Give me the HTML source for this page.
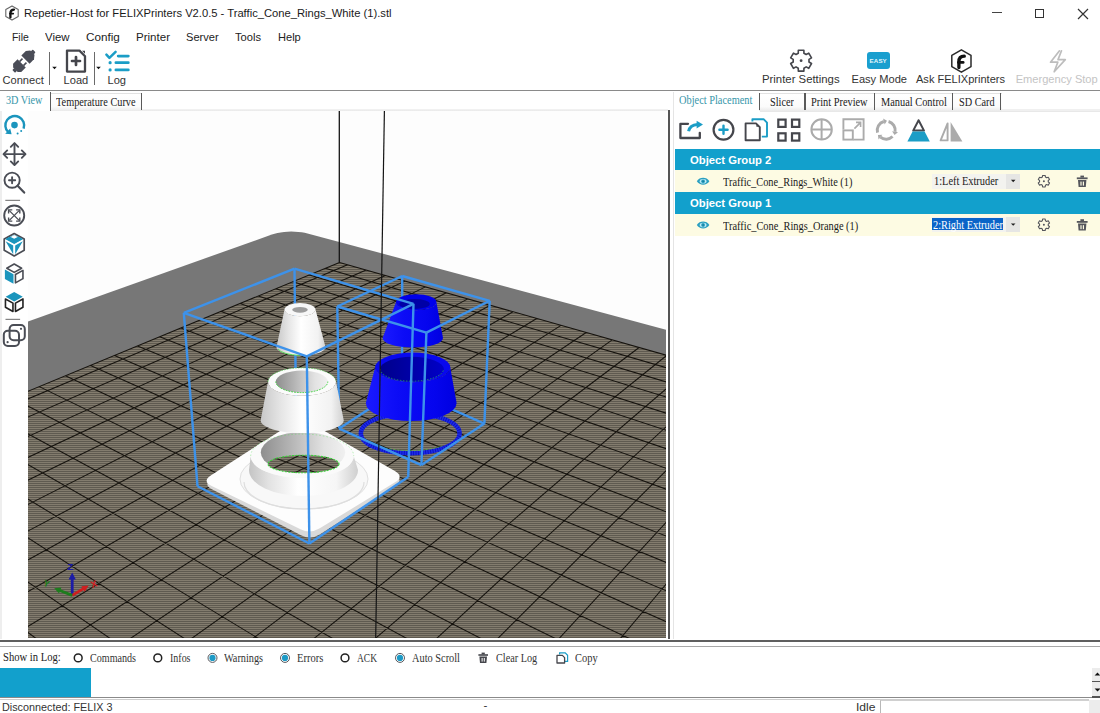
<!DOCTYPE html>
<html><head><meta charset="utf-8">
<style>
html,body{margin:0;padding:0;}
body{width:1100px;height:713px;overflow:hidden;background:#ffffff;position:relative;font-family:"Liberation Sans",sans-serif;color:#222;}
.a{position:absolute;white-space:nowrap;}
.sans{font-family:"Liberation Sans",sans-serif;}
.serif{font-family:"Liberation Serif",serif;}
svg{position:absolute;overflow:hidden;}
</style></head><body>
<svg style="left:4px;top:5px" width="16" height="17" viewBox="0 0 16 17"><path d="M8 0.9 L14.2 4.45 L14.2 11.55 L8 15.1 L1.8 11.55 L1.8 4.45 Z" fill="#fff" stroke="#666" stroke-width="1.1" stroke-linejoin="round"/><path d="M6.4 12.4 L6.4 8.2 C6.4 5.8 7.6 4.7 10 4.6" fill="none" stroke="#111" stroke-width="2.3" stroke-linecap="round"/><path d="M6 8.6 L9.2 8.6" stroke="#111" stroke-width="1.8" stroke-linecap="round"/></svg>
<div class="a" style="left:23.5px;top:7.38px;font-family:'Liberation Sans',sans-serif;font-size:11.6px;line-height:11.6px;color:#1a1a1a;font-weight:400;transform:scaleX(0.9656);transform-origin:0 0;">Repetier-Host for FELIXPrinters V2.0.5 - Traffic_Cone_Rings_White (1).stl</div>
<div class="a" style="left:992px;top:12px;width:10px;height:1.2px;background:#444;"></div>
<div class="a" style="left:1035px;top:9px;width:7px;height:7px;background:transparent;border:1.3px solid #333;"></div>
<svg style="left:1077px;top:8px" width="12" height="12" viewBox="0 0 12 12"><path d="M1 1L11 11M11 1L1 11" stroke="#333" stroke-width="1.2"/></svg>
<div class="a" style="left:12.0px;top:31.48px;font-family:'Liberation Sans',sans-serif;font-size:11.6px;line-height:11.6px;color:#222;font-weight:400;transform:scaleX(0.8990);transform-origin:0 0;">File</div>
<div class="a" style="left:45.0px;top:31.48px;font-family:'Liberation Sans',sans-serif;font-size:11.6px;line-height:11.6px;color:#222;font-weight:400;transform:scaleX(0.9831);transform-origin:0 0;">View</div>
<div class="a" style="left:85.7px;top:31.48px;font-family:'Liberation Sans',sans-serif;font-size:11.6px;line-height:11.6px;color:#222;font-weight:400;transform:scaleX(1.0085);transform-origin:0 0;">Config</div>
<div class="a" style="left:136.0px;top:31.48px;font-family:'Liberation Sans',sans-serif;font-size:11.6px;line-height:11.6px;color:#222;font-weight:400;transform:scaleX(0.9954);transform-origin:0 0;">Printer</div>
<div class="a" style="left:186.0px;top:31.48px;font-family:'Liberation Sans',sans-serif;font-size:11.6px;line-height:11.6px;color:#222;font-weight:400;transform:scaleX(0.9574);transform-origin:0 0;">Server</div>
<div class="a" style="left:235.0px;top:31.48px;font-family:'Liberation Sans',sans-serif;font-size:11.6px;line-height:11.6px;color:#222;font-weight:400;transform:scaleX(0.9602);transform-origin:0 0;">Tools</div>
<div class="a" style="left:278.0px;top:31.48px;font-family:'Liberation Sans',sans-serif;font-size:11.6px;line-height:11.6px;color:#222;font-weight:400;transform:scaleX(0.9556);transform-origin:0 0;">Help</div>
<svg style="left:0px;top:44px" width="60" height="40" viewBox="0 44 60 40"><g transform="translate(23.9,61.2) rotate(-45)"><rect x="-14.5" y="-2" width="3" height="4" rx="0.8" fill="#4a4d57"/><path d="M-12 -3.2 L-9.5 -5.8 L-3.2 -5.8 L-3.2 5.8 L-9.5 5.8 L-12 3.2Z" fill="#4a4d57"/><rect x="-3.4" y="-3.6" width="4.2" height="1.6" fill="#4a4d57"/><rect x="-3.4" y="2" width="4.2" height="1.6" fill="#4a4d57"/><path d="M2.2 -5.8 L8.5 -5.8 L12 -3 L12 3 L8.5 5.8 L2.2 5.8Z" fill="#4a4d57"/><rect x="11.5" y="-2" width="3" height="4" rx="0.8" fill="#4a4d57"/></g></svg>
<div class="a" style="left:2.5px;top:75.20px;font-family:'Liberation Sans',sans-serif;font-size:11.1px;line-height:11.1px;color:#333;font-weight:400;">Connect</div>
<div class="a" style="left:49px;top:52px;width:1.2px;height:33px;background:#6a6a6a;"></div>
<svg style="left:51px;top:66px" width="7" height="4" viewBox="0 0 7 4"><path d="M1.2 0.8 L5.8 0.8 L3.5 3.2Z" fill="#111"/></svg>
<svg style="left:60px;top:44px" width="40" height="40" viewBox="60 44 40 40"><path d="M67 50.6 L79.5 50.6 L85 56.2 L85 71.6 L67 71.6 Z" fill="none" stroke="#45464c" stroke-width="2.3" stroke-linejoin="round"/><path d="M81 50.2 L85.6 54.8 L85.6 50.2Z" fill="#fff"/><path d="M82 50.8 L85 53.8 L85 50.8Z" fill="#45464c"/><path d="M76 57 L76 65 M72 61 L80 61" stroke="#45464c" stroke-width="2.7" stroke-linecap="round"/></svg>
<div class="a" style="left:63.6px;top:75.20px;font-family:'Liberation Sans',sans-serif;font-size:11.1px;line-height:11.1px;color:#333;font-weight:400;">Load</div>
<div class="a" style="left:93.6px;top:52px;width:1.2px;height:33px;background:#6a6a6a;"></div>
<svg style="left:95px;top:66px" width="7" height="4" viewBox="0 0 7 4"><path d="M1.2 0.8 L5.8 0.8 L3.5 3.2Z" fill="#111"/></svg>
<svg style="left:100px;top:44px" width="40" height="40" viewBox="100 44 40 40"><path d="M106.4 54.6 L109.4 57.8 L115.6 51.8" fill="none" stroke="#1b9dc6" stroke-width="2.5" stroke-linecap="round" stroke-linejoin="round"/><path d="M118.2 56.1 L128.3 56.1 M115.9 62.7 L128.3 62.7 M115.9 69.9 L128.3 69.9" stroke="#1b9dc6" stroke-width="2.8" stroke-linecap="round"/><circle cx="110.1" cy="62.7" r="1.6" fill="#1b9dc6"/><circle cx="110.1" cy="69.9" r="1.6" fill="#1b9dc6"/></svg>
<div class="a" style="left:107.5px;top:75.20px;font-family:'Liberation Sans',sans-serif;font-size:11.1px;line-height:11.1px;color:#333;font-weight:400;">Log</div>
<svg style="left:780px;top:44px" width="40" height="40" viewBox="780 44 40 40"><g transform="translate(801.1,60.7)"><path d="M-2.82,-7.49 L-2.78,-10.44 L2.78,-10.44 L2.82,-7.49 L5.07,-6.18 L7.65,-7.62 L10.43,-2.81 L7.89,-1.30 L7.89,1.30 L10.43,2.81 L7.65,7.62 L5.07,6.18 L2.82,7.49 L2.78,10.44 L-2.78,10.44 L-2.82,7.49 L-5.07,6.18 L-7.65,7.62 L-10.43,2.81 L-7.89,1.30 L-7.89,-1.30 L-10.43,-2.81 L-7.65,-7.62 L-5.07,-6.18Z" fill="none" stroke="#45464c" stroke-width="1.6" stroke-linejoin="round"/><circle r="1.4" fill="#45464c"/></g></svg>
<div class="a" style="left:762.0px;top:73.89px;font-family:'Liberation Sans',sans-serif;font-size:11.35px;line-height:11.35px;color:#333;font-weight:400;">Printer Settings</div>
<div class="a" style="left:867px;top:52.3px;width:23px;height:17.2px;background:#1a9fcf;border-radius:3px;"></div>
<div class="a" style="left:869.6px;top:58.35px;font-family:'Liberation Sans',sans-serif;font-size:6.2px;line-height:6.2px;color:#e8f6fb;font-weight:700;letter-spacing:0.1px;">EASY</div>
<div class="a" style="left:851.5px;top:74.10px;font-family:'Liberation Sans',sans-serif;font-size:11.1px;line-height:11.1px;color:#333;font-weight:400;">Easy Mode</div>
<svg style="left:945px;top:44px" width="35" height="35" viewBox="945 44 35 35"><path d="M961.4 49.8 L971 55.4 L971 66.6 L961.4 72.2 L951.8 66.6 L951.8 55.4Z" fill="#fff" stroke="#2a2a2a" stroke-width="1.5" stroke-linejoin="round"/><path d="M958.9 67.6 L958.9 61.6 C958.9 58 960.6 56.3 964.3 56.2" fill="none" stroke="#111" stroke-width="3.3" stroke-linecap="round"/><path d="M958.4 62.4 L963.2 62.4" stroke="#111" stroke-width="2.6" stroke-linecap="round"/></svg>
<div class="a" style="left:916.0px;top:74.15px;font-family:'Liberation Sans',sans-serif;font-size:11.05px;line-height:11.05px;color:#333;font-weight:400;">Ask FELIXprinters</div>
<svg style="left:1040px;top:44px" width="35" height="35" viewBox="1040 44 35 35"><path d="M1059.5 50.8 L1050.5 62.2 L1057.8 62.2 L1054.2 71.8 L1065.3 59.6 L1058 59.6 L1061.5 50.8" fill="none" stroke="#bdbdbd" stroke-width="1.7" stroke-linejoin="round" stroke-linecap="round"/></svg>
<div class="a" style="left:1015.7px;top:74.10px;font-family:'Liberation Sans',sans-serif;font-size:11.1px;line-height:11.1px;color:#c4c4c4;font-weight:400;">Emergency Stop</div>
<div class="a" style="left:0px;top:89.5px;width:1100px;height:1.3px;background:#8a8a8a;"></div>
<div class="a" style="left:0px;top:108.5px;width:668px;height:2.5px;background:linear-gradient(#f4f4f4,#e9e9e9);"></div>
<div class="a" style="left:51px;top:93px;width:90px;height:18px;background:linear-gradient(#ffffff 0%,#fbfbfb 70%,#e6e6e6 100%);border-top:1px solid #e2e2e2;"></div>
<div class="a" style="left:0px;top:91px;width:50px;height:20px;background:#ffffff;"></div>
<div class="a" style="left:6.0px;top:93.85px;font-family:'Liberation Serif',serif;font-size:12px;line-height:12px;color:#3796aa;font-weight:400;transform:scaleX(0.8518);transform-origin:0 0;">3D View</div>
<div class="a" style="left:50px;top:92px;width:1.4px;height:18.5px;background:#5a5a5a;"></div>
<div class="a" style="left:56.2px;top:95.75px;font-family:'Liberation Serif',serif;font-size:12px;line-height:12px;color:#222;font-weight:400;transform:scaleX(0.8578);transform-origin:0 0;">Temperature Curve</div>
<div class="a" style="left:140.7px;top:93px;width:1.4px;height:17px;background:#5a5a5a;"></div>
<div class="a" style="left:674px;top:108.5px;width:426px;height:2.5px;background:linear-gradient(#f4f4f4,#e9e9e9);"></div>
<div class="a" style="left:760px;top:93px;width:340px;height:18px;background:linear-gradient(#ffffff 0%,#fbfbfb 70%,#e6e6e6 100%);border-top:1px solid #e2e2e2;"></div>
<div class="a" style="left:674px;top:91px;width:85px;height:20px;background:#ffffff;"></div>
<div class="a" style="left:673.2px;top:92px;width:1.2px;height:20px;background:#e6e6e6;"></div>
<div class="a" style="left:679.0px;top:93.55px;font-family:'Liberation Serif',serif;font-size:12px;line-height:12px;color:#3796aa;font-weight:400;transform:scaleX(0.8638);transform-origin:0 0;">Object Placement</div>
<div class="a" style="left:758.8px;top:93px;width:1.4px;height:17px;background:#5a5a5a;"></div>
<div class="a" style="left:804.1999999999999px;top:93px;width:1.4px;height:17px;background:#5a5a5a;"></div>
<div class="a" style="left:873.8px;top:93px;width:1.4px;height:17px;background:#5a5a5a;"></div>
<div class="a" style="left:952.1px;top:93px;width:1.4px;height:17px;background:#5a5a5a;"></div>
<div class="a" style="left:1000.1px;top:93px;width:1.4px;height:17px;background:#5a5a5a;"></div>
<div class="a" style="left:769.6px;top:95.75px;font-family:'Liberation Serif',serif;font-size:12px;line-height:12px;color:#222;font-weight:400;transform:scaleX(0.8571);transform-origin:0 0;">Slicer</div>
<div class="a" style="left:811.4px;top:95.75px;font-family:'Liberation Serif',serif;font-size:12px;line-height:12px;color:#222;font-weight:400;transform:scaleX(0.8619);transform-origin:0 0;">Print Preview</div>
<div class="a" style="left:880.7px;top:95.75px;font-family:'Liberation Serif',serif;font-size:12px;line-height:12px;color:#222;font-weight:400;transform:scaleX(0.8634);transform-origin:0 0;">Manual Control</div>
<div class="a" style="left:958.6px;top:95.75px;font-family:'Liberation Serif',serif;font-size:12px;line-height:12px;color:#222;font-weight:400;transform:scaleX(0.8543);transform-origin:0 0;">SD Card</div>
<div class="a" style="left:1001.5px;top:108.5px;width:98.5px;height:2.5px;background:#f0f0f0;"></div>
<div class="a" style="left:1001.5px;top:93px;width:98.5px;height:15.5px;background:#ffffff;"></div>
<svg style="left:0px;top:112px" width="28" height="240" viewBox="0 112 28 240"><path d="M23.6 128.6 A9.4 9.4 0 1 0 8.3 132.2" fill="none" stroke="#1b95bd" stroke-width="2.4"/><path d="M5.2 133.8 L11.6 134.3 L10.2 128.4Z" fill="#1b95bd"/><circle cx="14.5" cy="125.1" r="3.3" fill="#1b95bd"/><circle cx="21.2" cy="131" r="1" fill="#1b95bd"/><circle cx="17.6" cy="133.4" r="1" fill="#1b95bd"/><path d="M14.5 143.2 L14.5 165 M3.6 154.1 L25.4 154.1" stroke="#4a4d55" stroke-width="1.9"/><path d="M10.8 146.8 L14.5 143.1 L18.2 146.8 M10.8 161.4 L14.5 165.1 L18.2 161.4 M7.2 150.4 L3.5 154.1 L7.2 157.8 M21.8 150.4 L25.5 154.1 L21.8 157.8" fill="none" stroke="#4a4d55" stroke-width="1.9" stroke-linecap="round" stroke-linejoin="round"/><circle cx="12.1" cy="180.2" r="7.6" fill="none" stroke="#4a4d55" stroke-width="1.9"/><path d="M17.6 185.7 L24.2 192.6" stroke="#4a4d55" stroke-width="2.2" stroke-linecap="round"/><path d="M12.1 177.1 L12.1 183.3 M9 180.2 L15.2 180.2" stroke="#4a4d55" stroke-width="1.9" stroke-linecap="round"/><rect x="5.3" y="199.8" width="14.8" height="1.1" fill="#777"/><circle cx="14.2" cy="215.5" r="10" fill="none" stroke="#4a4d55" stroke-width="1.9"/><path d="M9.3 210.6 L19.1 220.4 M19.1 210.6 L9.3 220.4" stroke="#4a4d55" stroke-width="1.3"/><path d="M8.6 213.6 L8.6 209.9 L12.3 209.9 M16.1 209.9 L19.8 209.9 L19.8 213.6 M19.8 217.4 L19.8 221.1 L16.1 221.1 M12.3 221.1 L8.6 221.1 L8.6 217.4" fill="none" stroke="#4a4d55" stroke-width="1.4"/><polygon points="14.2,233.5 24.2,239.1 24.2,250.29999999999998 14.2,255.89999999999998 4.199999999999999,250.29999999999998 4.199999999999999,239.1" fill="none" stroke="#4a4d55" stroke-width="1.7" stroke-linejoin="round"/><polygon points="5.6,239.29999999999998 14.2,243.89999999999998 22.799999999999997,239.29999999999998 19.2,236.89999999999998 9.2,236.89999999999998" fill="#1b95bd"/><polygon points="5.6,241.29999999999998 13.2,245.5 13.2,254.29999999999998" fill="#1b95bd"/><polygon points="22.799999999999997,241.29999999999998 15.2,245.5 15.2,254.29999999999998" fill="#1b95bd"/><polygon points="5.6,239.1 14.2,234.7 22.799999999999997,239.1 14.2,243.5" fill="#1b95bd"/><polygon points="10.7,236.89999999999998 14.2,235.1 17.7,236.89999999999998 14.2,238.7" fill="#fff"/><polygon points="14.20,264.03 21.64,268.20 14.20,272.37 6.76,268.20" fill="none" stroke="#4a4d55" stroke-width="1.6" stroke-linejoin="round"/><polygon points="4.90,269.39 13.50,274.21 13.50,283.81 4.90,278.99" fill="#1b95bd"/><polygon points="15.45,274.53 22.95,270.33 22.95,278.67 15.45,282.87" fill="none" stroke="#4a4d55" stroke-width="1.6" stroke-linejoin="round"/><polygon points="14.20,292.00 22.77,296.80 14.20,301.60 5.63,296.80" fill="#1b95bd"/><polygon points="5.45,298.93 12.95,303.13 12.95,311.47 5.45,307.27" fill="none" stroke="#222" stroke-width="1.6" stroke-linejoin="round"/><polygon points="15.45,303.13 22.95,298.93 22.95,307.27 15.45,311.47" fill="none" stroke="#222" stroke-width="1.6" stroke-linejoin="round"/><rect x="5.5" y="318.8" width="14.6" height="1.1" fill="#777"/><rect x="9.6" y="325" width="15.2" height="15.2" rx="4" fill="none" stroke="#4a4d55" stroke-width="2"/><rect x="3.8" y="330.8" width="15.2" height="15.2" rx="4" fill="none" stroke="#4a4d55" stroke-width="2"/><circle cx="21" cy="328.8" r="1.1" fill="#4a4d55"/><circle cx="7.6" cy="342.2" r="1.1" fill="#4a4d55"/></svg>
<svg style="left:28px;top:111px" width="638" height="527" viewBox="28 111 638 527"><defs><pattern id="stripes" width="10" height="2" patternUnits="userSpaceOnUse"><rect width="10" height="2" fill="#5f5a50"/><rect width="10" height="1" fill="#837c6e"/></pattern></defs><rect x="28" y="111" width="638" height="527" fill="#fdfdfd"/><polygon points="-663.7,568.3 271.9,234.5 274.6,233.7 277.5,233.0 280.7,232.4 284.1,232.0 287.6,231.7 291.2,231.6 294.8,231.7 298.2,231.9 301.6,232.3 304.7,232.8 307.5,233.4 1937.8,671.4 700.0,700.0 0.0,700.0" fill="#777777"/>
<polygon points="339.5,262.4 1989.7,731.2 700.0,700.0 0.0,700.0 -620.6,659.5" fill="url(#stripes)"/>
<path d="M347.6,264.8L-389.9,574.3M366.2,270.0L-374.6,592.0M385.4,275.5L-358.5,610.6M405.2,281.1L-341.5,630.2M425.5,286.9L-323.6,650.9M446.4,292.8L-304.7,672.8M467.9,298.9L-284.6,695.9M490.2,305.2L-263.3,720.5M513.0,311.7L-240.7,746.6M536.7,318.5L-216.6,774.4M561.0,325.4L-191.0,804.0M586.2,332.5L-163.5,835.7M612.2,339.9L-134.1,869.6M639.1,347.5L-102.5,906.1M666.8,355.4L-68.5,945.4M695.6,363.6L-31.7,987.8M725.4,372.1L8.1,1033.7M756.2,380.8L51.3,1083.7M788.2,389.9L98.6,1138.2M821.4,399.3L150.3,1197.9M855.8,409.1L207.2,1263.5M891.6,419.3L270.0,1336.1M928.8,429.8L339.9,1416.8M967.5,440.8L418.0,1506.9M1007.8,452.3L505.9,1608.4M1049.8,464.2L605.6,1723.4M325.3,268.3L1089.6,491.1M309.4,274.9L1085.1,507.7M293.0,281.7L1080.4,525.2M276.0,288.7L1075.3,543.8M258.3,296.0L1070.0,563.4M240.0,303.6L1064.3,584.3M221.1,311.4L1058.3,606.5M201.4,319.5L1051.9,630.1M180.9,328.0L1045.0,655.3M159.7,336.8L1037.7,682.3M137.5,346.0L1029.9,711.3M114.5,355.5L1021.4,742.4M90.5,365.4L1012.3,775.9M65.4,375.8L1002.5,812.2M39.3,386.6L991.8,851.6M11.9,397.9L980.1,894.5M-16.7,409.7L967.4,941.3M-46.6,422.1L953.5,992.7M-78.0,435.1L938.1,1049.3M-110.9,448.7L921.1,1112.1M-145.5,463.0L902.1,1182.0M-181.9,478.0L880.8,1260.3M-220.2,493.9L856.8,1348.6M-260.6,510.6L829.6,1449.1M-303.4,528.3L798.3,1564.5M-348.6,547.0L762.0,1698.1M339.5,262.4L-396.5,566.8M339.5,262.4L1093.6,476.6" stroke="#16130e" stroke-width="1.05" fill="none"/><defs><linearGradient id="gw" x1="0" y1="0" x2="1" y2="0"><stop offset="0" stop-color="#c4c4c4"/><stop offset="0.18" stop-color="#e2e2e2"/><stop offset="0.45" stop-color="#ffffff"/><stop offset="0.8" stop-color="#f6f6f6"/><stop offset="1" stop-color="#cfcfcf"/></linearGradient><linearGradient id="gw2" x1="0" y1="0" x2="1" y2="0"><stop offset="0" stop-color="#c8c8c8"/><stop offset="0.25" stop-color="#e6e6e6"/><stop offset="0.5" stop-color="#ffffff"/><stop offset="0.85" stop-color="#f2f2f2"/><stop offset="1" stop-color="#d0d0d0"/></linearGradient><linearGradient id="ghole" x1="0" y1="0" x2="1" y2="0"><stop offset="0" stop-color="#8e8e8e"/><stop offset="0.35" stop-color="#b4b4b4"/><stop offset="0.75" stop-color="#e2e2e2"/><stop offset="1" stop-color="#f0f0f0"/></linearGradient><linearGradient id="gb" x1="0" y1="0" x2="1" y2="0"><stop offset="0" stop-color="#1a1aff"/><stop offset="0.35" stop-color="#0c0cf6"/><stop offset="0.75" stop-color="#0505ee"/><stop offset="1" stop-color="#0000e0"/></linearGradient><linearGradient id="gbh" x1="0" y1="0" x2="1" y2="0"><stop offset="0" stop-color="#00008a"/><stop offset="0.5" stop-color="#0000a8"/><stop offset="1" stop-color="#0000c8"/></linearGradient></defs><line x1="339.3" y1="111" x2="339.3" y2="262.3" stroke="#151515" stroke-width="1.3"/>
<line x1="402.2" y1="276" x2="402" y2="387.5" stroke="#3d92ea" stroke-width="2.4"/>
<line x1="402" y1="387.5" x2="339.2" y2="428.6" stroke="#3d92ea" stroke-width="2.4"/>
<line x1="402" y1="387.5" x2="484.4" y2="423.6" stroke="#3d92ea" stroke-width="2.4"/>
<line x1="294.5" y1="268.7" x2="296.1" y2="419.7" stroke="#3d92ea" stroke-width="2.4"/>
<ellipse cx="410.2" cy="433.4" rx="49.4" ry="19.9" fill="none" stroke="#1c2ae8" stroke-width="4.4" />
<ellipse cx="410.2" cy="433.4" rx="49.4" ry="19.9" fill="none" stroke="#0000a0" stroke-width="4.4" stroke-dasharray="0.9 1.5" opacity="0.6"/>
<path d="M378 446 A47.5 17.8 0 0 0 442 446" fill="none" stroke="#44dd44" stroke-width="0.8" stroke-dasharray="2 2" opacity="0.8"/>
<path d="M375.09999999999997,367.4 L365.8,403 A45.4,18 0 0 0 456.59999999999997,403 L450.3,367.4 A37.6,14.8 0 0 1 375.09999999999997,367.4Z" fill="url(#gb)" stroke="none"/>
<ellipse cx="412.7" cy="367.4" rx="37.6" ry="14.8" fill="#0808ee" stroke="none" stroke-width="1" />
<ellipse cx="411.9" cy="369.2" rx="32" ry="12.4" fill="url(#gbh)" stroke="none" stroke-width="1" />
<path d="M380.3,369 A31.6,12.2 0 0 0 443.5,369" fill="none" stroke="#33cc55" stroke-width="0.8" stroke-dasharray="1.5 1.5" opacity="0.8"/>
<path d="M396.0,302.2 L382.6,338 A30.2,9.5 0 0 0 443.0,338 L436.4,302.2 A20.2,8 0 0 1 396.0,302.2Z" fill="url(#gb)" stroke="none"/>
<ellipse cx="416.2" cy="302.2" rx="20.2" ry="8" fill="#0000ea" stroke="none" stroke-width="1" />
<ellipse cx="414.6" cy="304" rx="15.2" ry="5" fill="#0000a6" stroke="none" stroke-width="1" />
<line x1="337.3" y1="306.5" x2="402.2" y2="276" stroke="#3d92ea" stroke-width="2.4"/>
<line x1="402.2" y1="276" x2="489.7" y2="300.8" stroke="#3d92ea" stroke-width="2.4"/>
<line x1="489.7" y1="300.8" x2="426.4" y2="332.6" stroke="#3d92ea" stroke-width="2.4"/>
<line x1="426.4" y1="332.6" x2="337.3" y2="306.5" stroke="#3d92ea" stroke-width="2.4"/>
<line x1="337.3" y1="306.5" x2="339.2" y2="428.6" stroke="#3d92ea" stroke-width="2.4"/>
<line x1="426.4" y1="332.6" x2="421.4" y2="465.1" stroke="#3d92ea" stroke-width="2.4"/>
<line x1="489.7" y1="300.8" x2="484.4" y2="423.6" stroke="#3d92ea" stroke-width="2.4"/>
<line x1="339.2" y1="428.6" x2="421.4" y2="465.1" stroke="#3d92ea" stroke-width="2.4"/>
<line x1="421.4" y1="465.1" x2="484.4" y2="423.6" stroke="#3d92ea" stroke-width="2.4"/>
<path d="M212.4,489.6Q202.6,484.6 211.8,478.6L291.8,427.0Q301.0,421.0 310.5,426.5L394.7,474.9Q404.2,480.4 394.9,486.3L320.1,534.3Q310.8,540.2 301.0,535.2Z" fill="#d9d9d9"/>
<path d="M211.7,486.0Q201.8,481.2 211.1,475.2L291.7,423.4Q301.0,417.4 310.5,422.9L394.9,471.1Q404.4,476.6 395.0,482.3L319.8,528.3Q310.4,534.0 300.5,529.2Z" fill="#fdfdfd"/>
<ellipse cx="304" cy="479" rx="64" ry="30" fill="#f8f8f8" stroke="#e0e0e0" stroke-width="1" />
<path d="M244,482 A60 27 0 0 0 364,482" fill="none" stroke="#dedede" stroke-width="1.2"/>
<path d="M250.7,456 L249.0,470 A54.5,26 0 0 0 358.0,470 L353.7,456 A51.5,22 0 0 1 250.7,456Z" fill="url(#gw)" stroke="none"/>
<ellipse cx="302.2" cy="456" rx="51.5" ry="22" fill="#fafafa" stroke="none" stroke-width="1" />
<ellipse cx="303" cy="452.5" rx="42.2" ry="20.5" fill="url(#ghole)" stroke="none" stroke-width="1" />
<clipPath id="hc"><ellipse cx="303.5" cy="464" rx="35.5" ry="8.8"/></clipPath>
<g clip-path="url(#hc)"><rect x="260" y="450" width="90" height="30" fill="url(#stripes)"/><path d="M270 470 L300 455 M290 475 L330 456 M275 458 L320 474 M300 455 L340 470" stroke="#1c1812" stroke-width="1.1"/></g>
<ellipse cx="303.5" cy="464" rx="35.5" ry="8.8" fill="none" stroke="#3ad43a" stroke-width="1.1" stroke-dasharray="2 1.2"/>
<path d="M250.7,456 A51.5,22 0 0 1 353.7,456" fill="none" stroke="#55dd55" stroke-width="0.7" stroke-dasharray="1.5 2" opacity="0.6"/>
<path d="M268,381.8 L260.59999999999997,420.5 A41.6,12.6 0 0 0 343.8,420.5 L336,381.8 A34,14 0 0 1 268,381.8Z" fill="url(#gw2)" stroke="none"/>
<ellipse cx="302" cy="381.8" rx="34" ry="14" fill="#fbfbfb" stroke="none" stroke-width="1" />
<ellipse cx="301.8" cy="381.6" rx="26" ry="11" fill="url(#ghole)" stroke="none" stroke-width="1" />
<path d="M275.8,381.6 A26,11 0 0 0 327.8,381.6" fill="none" stroke="#3ad43a" stroke-width="1" stroke-dasharray="1.6 1.2"/>
<path d="M268,381.8 A34,14 0 0 1 336,381.8" fill="none" stroke="#44cc44" stroke-width="0.9" stroke-dasharray="1.5 1.2" opacity="0.75"/>
<path d="M284.5,309.6 L276.4,347.2 A24.6,8.2 0 0 0 325.6,347.2 L315.5,309.6 A15.5,6.6 0 0 1 284.5,309.6Z" fill="url(#gw2)" stroke="none"/>
<ellipse cx="300" cy="309.6" rx="15.5" ry="6.6" fill="#f7f7f7" stroke="none" stroke-width="1" />
<ellipse cx="300" cy="309.8" rx="7.8" ry="2.9" fill="#9c9c9c" stroke="none" stroke-width="1" />
<path d="M278,349 A24.6,8.2 0 0 0 300,355.4" fill="none" stroke="#44dd44" stroke-width="1" opacity="0.8"/>
<line x1="183.8" y1="312.8" x2="294.5" y2="268.7" stroke="#3d92ea" stroke-width="2.4"/>
<line x1="294.5" y1="268.7" x2="413.5" y2="303.8" stroke="#3d92ea" stroke-width="2.4"/>
<line x1="413.5" y1="303.8" x2="306.8" y2="356.4" stroke="#3d92ea" stroke-width="2.4"/>
<line x1="306.8" y1="356.4" x2="183.8" y2="312.8" stroke="#3d92ea" stroke-width="2.4"/>
<line x1="183.8" y1="312.8" x2="197.5" y2="486.2" stroke="#3d92ea" stroke-width="2.4"/>
<line x1="306.8" y1="356.4" x2="309.4" y2="543.5" stroke="#3d92ea" stroke-width="2.4"/>
<line x1="413.5" y1="303.8" x2="408.2" y2="477" stroke="#3d92ea" stroke-width="2.4"/>
<line x1="197.5" y1="486.2" x2="309.4" y2="543.5" stroke="#3d92ea" stroke-width="2.4"/>
<line x1="309.4" y1="543.5" x2="408.2" y2="477" stroke="#3d92ea" stroke-width="2.4"/>
<line x1="384.4" y1="111" x2="375.7" y2="638" stroke="#151515" stroke-width="1.2"/>
<g><path d="M72.2 595.4 L72.2 578.4" stroke="#1c1ca6" stroke-width="2.8"/><path d="M72.2 572.4 L75.8 579.4 L68.6 579.4Z" fill="#1c1ca6"/><path d="M72.2 595.4 L83.9 588.4" stroke="#cf1f1f" stroke-width="2.8"/><path d="M88.6 585.6 L84.7 591.7 L81.4 586.2Z" fill="#cf1f1f"/><path d="M72.2 595.4 L59.3 590.2" stroke="#1d7d1d" stroke-width="2.8"/><path d="M54.2 588.2 L61.4 587.6 L59.0 593.6Z" fill="#1d7d1d"/><text x="67.6" y="569.6" font-family="Liberation Sans" font-size="9.5" font-weight="700" fill="#1c1ca6">Z</text><text x="90.2" y="587.6" font-family="Liberation Sans" font-size="9.5" font-weight="700" fill="#cf1f1f" transform="rotate(-20 93 583)">X</text><text x="43.6" y="587" font-family="Liberation Sans" font-size="9.5" font-weight="700" fill="#1d7d1d" transform="rotate(20 47 583)">Y</text></g></svg>
<div class="a" style="left:668px;top:110px;width:1.6px;height:529px;background:#555;"></div>
<div class="a" style="left:673.2px;top:111px;width:1.3px;height:528px;background:#e4e4e4;"></div>
<div class="a" style="left:0px;top:111px;width:1.6px;height:528px;background:#eeeeee;"></div>
<svg style="left:674px;top:112px" width="300" height="36" viewBox="674 112 300 36"><path d="M688 123.8 L680.4 123.8 L680.4 138 L699.8 138 L699.8 132.8" fill="none" stroke="#45464c" stroke-width="2.3" stroke-linejoin="round" stroke-linecap="round"/><path d="M688.6 131.2 C689.6 126.6 693 124.6 697.4 124.4" fill="none" stroke="#1b9dc6" stroke-width="3"/><path d="M696.6 120.8 L703 124.6 L696.6 128.4Z" fill="#1b9dc6"/><circle cx="723.5" cy="129.7" r="9.9" fill="none" stroke="#45464c" stroke-width="2.2"/><path d="M723.5 125.6 L723.5 133.8 M719.4 129.7 L727.6 129.7" stroke="#1b9dc6" stroke-width="2.4" stroke-linecap="round"/><path d="M752.4 121.5 L752.4 119.2 L763.6 119.2 L767 122.6 L767 136.6 L761.8 136.6" fill="none" stroke="#1b9dc6" stroke-width="1.9" stroke-linejoin="round"/><path d="M745.6 123.4 L756 123.4 L759.8 127.2 L759.8 140.2 L745.6 140.2Z" fill="#fff" stroke="#45464c" stroke-width="1.9" stroke-linejoin="round"/><path d="M756.4 123.6 L759.6 126.8 L756.4 126.8Z" fill="#45464c"/><rect x="778.3000000000001" y="119.6" width="7.3" height="7.3" fill="none" stroke="#45464c" stroke-width="2.2"/><rect x="792.0" y="119.6" width="7.3" height="7.3" fill="none" stroke="#45464c" stroke-width="2.2"/><rect x="778.3000000000001" y="133.29999999999998" width="7.3" height="7.3" fill="none" stroke="#45464c" stroke-width="2.2"/><rect x="792.0" y="133.29999999999998" width="7.3" height="7.3" fill="none" stroke="#45464c" stroke-width="2.2"/><circle cx="821.6" cy="129.4" r="10.2" fill="none" stroke="#ababab" stroke-width="2"/><path d="M821.6 119.2 L821.6 139.6 M811.4 129.4 L831.8 129.4" stroke="#ababab" stroke-width="2"/><path d="M843.4 129.6 L843.4 119.2 L863.6 119.2 L863.6 139.6 L853.4 139.6" fill="none" stroke="#ababab" stroke-width="1.9"/><rect x="843.4" y="130.4" width="9.4" height="9.2" fill="none" stroke="#ababab" stroke-width="1.9"/><path d="M854.4 128.6 L860.4 122.6 M856 122.4 L860.6 122.4 L860.6 127" fill="none" stroke="#ababab" stroke-width="1.6"/><path d="M877.51 132.53 A9.0 9.0 0 0 1 883.87 121.51" fill="none" stroke="#ababab" stroke-width="2.9"/><path d="M888.53 121.51 A9.0 9.0 0 0 1 895.06 131.76" fill="none" stroke="#ababab" stroke-width="2.9"/><path d="M892.56 136.56 A9.0 9.0 0 0 1 880.41 137.09" fill="none" stroke="#ababab" stroke-width="2.9"/><path d="M886.96 120.68 L883.09 118.61 L884.65 124.40Z M894.51 134.91 L898.02 132.28 L892.11 131.24Z M877.96 135.04 L878.49 139.39 L882.34 134.80Z " fill="#ababab"/><path d="M918.6 120.2 L913.2 130.6 L924 130.6Z" fill="none" stroke="#45464c" stroke-width="2" stroke-linejoin="round"/><path d="M912.6 131.4 L924.6 131.4 L929.8 141.4 L907.4 141.4Z" fill="#1b9dc6"/><path d="M947.6 123.4 L947.6 140.4 L940.6 140.4Z" fill="none" stroke="#ababab" stroke-width="1.9" stroke-linejoin="round"/><path d="M950.6 122 L962.4 141.4 L950.6 141.4Z" fill="#ababab"/></svg>
<div class="a" style="left:675px;top:149px;width:425px;height:21px;background:#12a0cc;"></div>
<div class="a" style="left:689.8px;top:155.23px;font-family:'Liberation Sans',sans-serif;font-size:10.6px;line-height:10.6px;color:#ffffff;font-weight:700;transform:scaleX(1.0636);transform-origin:0 0;">Object Group 2</div>
<div class="a" style="left:675px;top:170px;width:425px;height:22px;background:#fdfbe3;"></div>
<div class="a" style="left:675px;top:192px;width:425px;height:21.5px;background:#12a0cc;"></div>
<div class="a" style="left:689.8px;top:198.43px;font-family:'Liberation Sans',sans-serif;font-size:10.6px;line-height:10.6px;color:#ffffff;font-weight:700;transform:scaleX(1.0636);transform-origin:0 0;">Object Group 1</div>
<div class="a" style="left:675px;top:213.5px;width:425px;height:22.5px;background:#fdfbe3;"></div>
<svg style="left:694px;top:170px" width="20" height="66" viewBox="694 170 20 66"><path d="M696.8 181.3 C699.6 176.70000000000002 706.6 176.70000000000002 709.4 181.3 C706.6 185.9 699.6 185.9 696.8 181.3Z" fill="#2a9fc0"/><ellipse cx="703.1" cy="181.3" rx="3.4" ry="2.3" fill="#bfeaf5"/><circle cx="703.1" cy="181.3" r="1.9" fill="#2a9fc0"/><circle cx="703.1" cy="181.3" r="0.8" fill="#12708c"/><path d="M696.8 225 C699.6 220.4 706.6 220.4 709.4 225 C706.6 229.6 699.6 229.6 696.8 225Z" fill="#2a9fc0"/><ellipse cx="703.1" cy="225" rx="3.4" ry="2.3" fill="#bfeaf5"/><circle cx="703.1" cy="225" r="1.9" fill="#2a9fc0"/><circle cx="703.1" cy="225" r="0.8" fill="#12708c"/></svg>
<div class="a" style="left:723.0px;top:176.15px;font-family:'Liberation Serif',serif;font-size:12px;line-height:12px;color:#1a1a1a;font-weight:400;transform:scaleX(0.8608);transform-origin:0 0;">Traffic_Cone_Rings_White (1)</div>
<div class="a" style="left:723.0px;top:219.55px;font-family:'Liberation Serif',serif;font-size:12px;line-height:12px;color:#1a1a1a;font-weight:400;transform:scaleX(0.8649);transform-origin:0 0;">Traffic_Cone_Rings_Orange (1)</div>
<div class="a" style="left:931.5px;top:174px;width:88.3px;height:14.7px;background:#f3f3ef;"></div>
<div class="a" style="left:1006px;top:174px;width:13.8px;height:14.7px;background:#e6e6e4;"></div>
<div class="a" style="left:934.0px;top:175.15px;font-family:'Liberation Serif',serif;font-size:12px;line-height:12px;color:#1a1a1a;font-weight:400;transform:scaleX(0.8639);transform-origin:0 0;">1:Left Extruder</div>
<div class="a" style="left:931.5px;top:217.4px;width:88.3px;height:14.6px;background:#f3f3ef;"></div>
<div class="a" style="left:1006px;top:217.4px;width:13.8px;height:14.6px;background:#e6e6e4;"></div>
<div class="a" style="left:932.3px;top:218.2px;width:70.8px;height:12.3px;background:#0a64c8;"></div>
<div class="a" style="left:933.0px;top:218.75px;font-family:'Liberation Serif',serif;font-size:12px;line-height:12px;color:#ffffff;font-weight:400;transform:scaleX(0.8642);transform-origin:0 0;">2:Right Extruder</div>
<svg style="left:1008px;top:176px" width="10" height="56" viewBox="0 0 10 56"><path d="M2.9 3.8 L7.5 3.8 L5.2 6.2Z M2.9 47.4 L7.5 47.4 L5.2 49.8Z" fill="#222"/></svg>
<svg style="left:1030px;top:170px" width="70" height="66" viewBox="1030 170 70 66"><polygon points="1042.35,177.08 1042.61,175.44 1045.19,175.44 1045.45,177.08 1046.69,177.80 1048.24,177.21 1049.53,179.44 1048.24,180.48 1048.24,181.92 1049.53,182.96 1048.24,185.19 1046.69,184.60 1045.45,185.32 1045.19,186.96 1042.61,186.96 1042.35,185.32 1041.11,184.60 1039.56,185.19 1038.27,182.96 1039.56,181.92 1039.56,180.48 1038.27,179.44 1039.56,177.21 1041.11,177.80" fill="none" stroke="#55565c" stroke-width="1.1" stroke-linejoin="round"/><circle cx="1043.9" cy="181.2" r="1" fill="#55565c"/><polygon points="1042.35,220.68 1042.61,219.04 1045.19,219.04 1045.45,220.68 1046.69,221.40 1048.24,220.81 1049.53,223.04 1048.24,224.08 1048.24,225.52 1049.53,226.56 1048.24,228.79 1046.69,228.20 1045.45,228.92 1045.19,230.56 1042.61,230.56 1042.35,228.92 1041.11,228.20 1039.56,228.79 1038.27,226.56 1039.56,225.52 1039.56,224.08 1038.27,223.04 1039.56,220.81 1041.11,221.40" fill="none" stroke="#55565c" stroke-width="1.1" stroke-linejoin="round"/><circle cx="1043.9" cy="224.8" r="1" fill="#55565c"/><rect x="1076.8" y="177.4" width="10.8" height="1.8" fill="#55565c"/><rect x="1080.3999999999999" y="175.6" width="3.6" height="2" fill="#55565c"/><path d="M1078.0 180.0 L1086.3999999999999 180.0 L1085.8 187.0 L1078.6 187.0Z" fill="#55565c"/><rect x="1080.3999999999999" y="181.6" width="1.2" height="4" fill="#fdfbe3"/><rect x="1082.8" y="181.6" width="1.2" height="4" fill="#fdfbe3"/><rect x="1076.8" y="221.0" width="10.8" height="1.8" fill="#55565c"/><rect x="1080.3999999999999" y="219.2" width="3.6" height="2" fill="#55565c"/><path d="M1078.0 223.6 L1086.3999999999999 223.6 L1085.8 230.6 L1078.6 230.6Z" fill="#55565c"/><rect x="1080.3999999999999" y="225.2" width="1.2" height="4" fill="#fdfbe3"/><rect x="1082.8" y="225.2" width="1.2" height="4" fill="#fdfbe3"/></svg>
<div class="a" style="left:0px;top:640px;width:1100px;height:1.8px;background:#5f5f5f;"></div>
<div class="a" style="left:0px;top:645.8px;width:1100px;height:1.2px;background:#a8a8a8;"></div>
<div class="a" style="left:3.3px;top:651.35px;font-family:'Liberation Serif',serif;font-size:12px;line-height:12px;color:#222;font-weight:400;transform:scaleX(0.8830);transform-origin:0 0;">Show in Log:</div>
<div class="a" style="left:90.0px;top:651.75px;font-family:'Liberation Serif',serif;font-size:12px;line-height:12px;color:#333;font-weight:400;transform:scaleX(0.8414);transform-origin:0 0;">Commands</div>
<div class="a" style="left:170.0px;top:651.75px;font-family:'Liberation Serif',serif;font-size:12px;line-height:12px;color:#333;font-weight:400;transform:scaleX(0.8309);transform-origin:0 0;">Infos</div>
<div class="a" style="left:224.4px;top:651.75px;font-family:'Liberation Serif',serif;font-size:12px;line-height:12px;color:#333;font-weight:400;transform:scaleX(0.8555);transform-origin:0 0;">Warnings</div>
<div class="a" style="left:297.0px;top:651.75px;font-family:'Liberation Serif',serif;font-size:12px;line-height:12px;color:#333;font-weight:400;transform:scaleX(0.8767);transform-origin:0 0;">Errors</div>
<div class="a" style="left:357.0px;top:651.75px;font-family:'Liberation Serif',serif;font-size:12px;line-height:12px;color:#333;font-weight:400;transform:scaleX(0.7891);transform-origin:0 0;">ACK</div>
<div class="a" style="left:411.6px;top:651.75px;font-family:'Liberation Serif',serif;font-size:12px;line-height:12px;color:#333;font-weight:400;transform:scaleX(0.8622);transform-origin:0 0;">Auto Scroll</div>
<svg style="left:0px;top:646px" width="620" height="24" viewBox="0 646 620 24"><circle cx="78.2" cy="657.9" r="3.9" fill="#fff" stroke="#222" stroke-width="1.5"/><circle cx="157.8" cy="657.9" r="3.9" fill="#fff" stroke="#222" stroke-width="1.5"/><circle cx="212.5" cy="657.9" r="4.5" fill="#fff" stroke="#55575c" stroke-width="1"/><circle cx="212.5" cy="657.9" r="3.1" fill="#1d9ac6"/><circle cx="285" cy="657.9" r="4.5" fill="#fff" stroke="#55575c" stroke-width="1"/><circle cx="285" cy="657.9" r="3.1" fill="#1d9ac6"/><circle cx="345" cy="657.9" r="3.9" fill="#fff" stroke="#222" stroke-width="1.5"/><circle cx="400" cy="657.9" r="4.5" fill="#fff" stroke="#55575c" stroke-width="1"/><circle cx="400" cy="657.9" r="3.1" fill="#1d9ac6"/><rect x="478.4" y="654.2" width="9.6" height="1.6" fill="#45464c"/><rect x="481.6" y="652.6" width="3.2" height="1.8" fill="#45464c"/><path d="M479.4 656.6 L487 656.6 L486.4 663 L480 663Z" fill="#45464c"/><rect x="481.6" y="658" width="1" height="3.6" fill="#fff"/><rect x="483.8" y="658" width="1" height="3.6" fill="#fff"/><path d="M559.6 654.6 L559.6 652.9 L565.2 652.9 L567.6 655.3 L567.6 661.4 L565 661.4" fill="none" stroke="#1b9dc6" stroke-width="1.2"/><path d="M557 655.4 L562.4 655.4 L564.6 657.6 L564.6 663 L557 663Z" fill="#fff" stroke="#45464c" stroke-width="1.3" stroke-linejoin="round"/></svg>
<div class="a" style="left:496.3px;top:651.75px;font-family:'Liberation Serif',serif;font-size:12px;line-height:12px;color:#333;font-weight:400;transform:scaleX(0.8525);transform-origin:0 0;">Clear Log</div>
<div class="a" style="left:574.9px;top:651.75px;font-family:'Liberation Serif',serif;font-size:12px;line-height:12px;color:#333;font-weight:400;transform:scaleX(0.8687);transform-origin:0 0;">Copy</div>
<div class="a" style="left:0px;top:668.4px;width:91.3px;height:28.6px;background:#12a0cc;"></div>
<div class="a" style="left:0px;top:696.6px;width:1092px;height:1.6px;background:#8a8a8a;"></div>
<div class="a" style="left:0px;top:698.8px;width:1089px;height:1.6px;background:#cdcdcd;"></div>
<div class="a" style="left:1092.2px;top:668.4px;width:7.8px;height:12.8px;background:#ececec;"></div>
<div class="a" style="left:1092.2px;top:682.4px;width:7.8px;height:14px;background:#ececec;"></div>
<div class="a" style="left:1092.2px;top:681px;width:7.8px;height:1.2px;background:#555;"></div>
<div class="a" style="left:1092.2px;top:696.2px;width:7.8px;height:1.6px;background:#555;"></div>
<svg style="left:1092px;top:668px" width="8" height="30" viewBox="0 0 8 30"><path d="M2.6 7.6 L8.4 7.6 L5.5 4.6Z M2.6 20.6 L8.4 20.6 L5.5 23.6Z" fill="#111"/></svg>
<div class="a" style="left:2.2px;top:700.78px;font-family:'Liberation Sans',sans-serif;font-size:11.6px;line-height:11.6px;color:#333;font-weight:400;transform:scaleX(0.9319);transform-origin:0 0;">Disconnected: FELIX 3</div>
<div class="a" style="left:483.5px;top:698.68px;font-family:'Liberation Sans',sans-serif;font-size:11.6px;line-height:11.6px;color:#333;font-weight:400;">-</div>
<div class="a" style="left:856.0px;top:700.78px;font-family:'Liberation Sans',sans-serif;font-size:11.6px;line-height:11.6px;color:#333;font-weight:400;transform:scaleX(1.0426);transform-origin:0 0;">Idle</div>
<div class="a" style="left:879.5px;top:700px;width:209px;height:13px;background:#ffffff;border-left:1px solid #b8b8b8;border-top:1px solid #d0d0d0;box-sizing:border-box;"></div>
<div class="a" style="left:1089px;top:699.6px;width:11px;height:13.4px;background:#ececec;"></div>
</body></html>
